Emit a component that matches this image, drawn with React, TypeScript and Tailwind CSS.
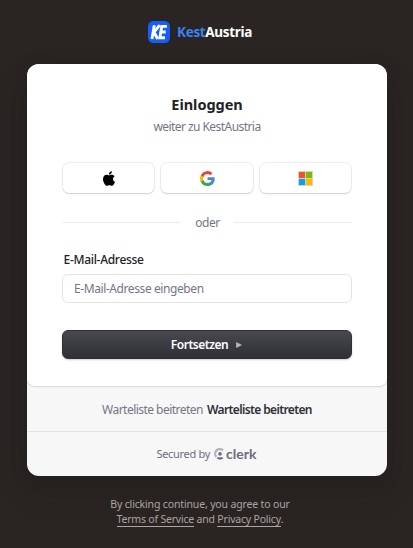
import React from 'react';

function Brand() {
  return (
    <header className="flex h-[22px] items-center justify-center gap-[7px] pr-[13px]">
      <svg width="22" height="22" viewBox="0 0 22 22">
        <rect width="22" height="22" rx="5.5" fill="#155dfc" />
        <g fill="none" stroke="#fff" strokeWidth="2.9">
          <path d="M6.3 4.2 4 18" />
          <path d="M11.7 4.2 6 11.2 9.7 18" />
          <path d="M18.9 5.4h-5.1l-2 11.3h5.2M12.9 11h4.8" />
        </g>
      </svg>
      <span className="text-[13.5px] leading-[22px] font-bold tracking-[-0.33px] whitespace-nowrap text-white">
        <span className="text-[#3b82f6]">Kest</span>Austria
      </span>
    </header>
  );
}

function AppleIcon() {
  return (
    <svg width="12" height="15" viewBox="0 0 814 1000" fill="#000">
      <path d="M788.1 340.9c-5.8 4.5-108.2 62.2-108.2 190.5 0 148.4 130.3 200.9 134.2 202.2-.6 3.2-20.7 71.9-68.7 141.9-42.8 61.6-87.5 123.1-155.5 123.1s-85.5-39.5-164-39.5c-76.5 0-103.7 40.8-165.9 40.8s-105.6-57-155.5-127C46.7 790.7 0 663 0 541.8c0-194.4 126.4-297.5 250.8-297.5 66.1 0 121.2 43.4 162.7 43.4 39.5 0 101.1-46 176.3-46 28.5 0 130.9 2.6 198.3 99.2zm-234-181.5c31.1-36.9 53.1-88.1 53.1-139.3 0-7.1-.6-14.3-1.9-20.1-50.6 1.9-110.8 33.7-147.1 75.8-28.5 32.4-55.1 83.6-55.1 135.5 0 7.8 1.3 15.6 1.9 18.1 3.2.6 8.4 1.3 13.6 1.3 45.4 0 102.5-30.4 135.5-71.3z" />
    </svg>
  );
}

function GoogleIcon() {
  return (
    <svg width="15" height="15" viewBox="0 0 24 24">
      <path fill="#4285f4" d="M23.5 12.3c0-.8-.1-1.6-.2-2.3H12v4.5h6.5a5.6 5.6 0 0 1-2.4 3.6v3h3.9c2.2-2.1 3.5-5.1 3.5-8.8z" />
      <path fill="#34a853" d="M12 24c3.2 0 6-1.1 8-2.9l-3.9-3c-1.1.7-2.5 1.1-4.1 1.1a7.2 7.2 0 0 1-6.7-4.9h-4v3.1A12 12 0 0 0 12 24z" />
      <path fill="#fbbc05" d="M5.3 14.3a7 7 0 0 1 0-4.6V6.6h-4a12 12 0 0 0 0 10.8z" />
      <path fill="#ea4335" d="M12 4.8c1.8 0 3.4.6 4.6 1.8L20 3.2A12 12 0 0 0 1.3 6.6l4 3.1A7.2 7.2 0 0 1 12 4.8z" />
    </svg>
  );
}

function MicrosoftIcon() {
  return (
    <svg width="15" height="15" viewBox="0 0 15 15">
      <path fill="#d9d2c4" d="M0 0h15v15H0z" />
      <path fill="#f25022" d="M1 1h6v6H1z" />
      <path fill="#7fba00" d="M8 1h6v6H8z" />
      <path fill="#00a4ef" d="M1 8h6v6H1z" />
      <path fill="#ffb900" d="M8 8h6v6H8z" />
    </svg>
  );
}

function ClerkMark() {
  return (
    <svg width="11" height="12" viewBox="0 0 11 12">
      <path d="M9 2.4A4.5 4.5 0 0 0 2.5 8.9" fill="none" stroke="#b4b4bd" strokeWidth="2.3" />
      <circle cx="6" cy="5.9" r="1.8" fill="#6c6c7c" />
      <path d="M2.6 10.5 4.1 9q1.9.9 3.8 0l1.5 1.5q-3.2 2.3-6.8 0z" fill="#6c6c7c" />
    </svg>
  );
}

function SocialButton({ label, children }: { label: string; children: React.ReactNode }) {
  return (
    <button
      aria-label={label}
      className="flex h-[30px] flex-1 items-center justify-center rounded-md bg-white shadow-[0_0_0_1px_rgba(0,0,0,0.07),0_1px_1px_rgba(0,0,0,0.08),0_2px_3px_rgba(0,0,0,0.03)]"
    >
      {children}
    </button>
  );
}

export default function App() {
  return (
    <div className="flex h-[548px] w-[413px] flex-col items-center overflow-hidden bg-[#2a2523] pt-[21px] font-['Noto_Sans',sans-serif] text-[12px]">
      <Brand />
      <main className="mt-[21px] flex h-[412px] w-[360px] shrink-0 flex-col overflow-hidden rounded-xl bg-[#f7f7f7] shadow-[0_5px_15px_rgba(25,28,25,0.3),0_15px_35px_-5px_rgba(25,28,25,0.25)]">
        <section className="h-[322px] rounded-b-lg bg-white px-[35px] pt-[30px] shadow-[0_0_1px_1px_rgba(0,0,0,0.06),0_1px_2px_rgba(0,0,0,0.08)]">
          <h1 className="h-[21px] pl-px text-center text-[14.5px] leading-[20px] font-bold tracking-[-0.03px] text-[#212126]">Einloggen</h1>
          <p className="mt-[3px] h-[18px] pl-px text-center leading-[18px] tracking-[-0.56px] text-[#747686]">weiter zu KestAustria</p>
          <div className="mt-[27px] flex gap-[7px] pr-[0.3px] pl-[1.5px]">
            <SocialButton label="Apple"><AppleIcon /></SocialButton>
            <SocialButton label="Google"><GoogleIcon /></SocialButton>
            <SocialButton label="Microsoft"><MicrosoftIcon /></SocialButton>
          </div>
          <div className="mt-[21px] flex h-[18px] items-center gap-[14px] pl-px">
            <i className="mb-px h-px flex-1 bg-[#ebebeb]" />
            <span className="pl-px leading-[18px] tracking-[-0.45px] text-[#747686]">oder</span>
            <i className="mb-px h-px flex-1 bg-[#ebebeb]" />
          </div>
          <label className="mt-[19px] block h-[18px] pl-[2px] leading-[18px] font-medium tracking-[-0.3px] text-[#212126]">E-Mail-Adresse</label>
          <div className="mt-[5px] flex h-[29px] items-center rounded-md border border-[#e3e3e3] bg-white pl-[11.5px] leading-[18px] tracking-[-0.41px] text-[#747686]">
            E-Mail-Adresse eingeben
          </div>
          <button className="mt-[27px] flex h-[29px] w-full items-center justify-center gap-2 rounded-md border border-[#303036] bg-linear-to-b from-[#48484e] to-[#2f3037] font-semibold tracking-[-0.47px] text-white shadow-[0_1px_2px_rgba(0,0,0,0.2)]">
            Fortsetzen
            <svg width="6" height="6" viewBox="0 0 6 6"><path d="M.2 0 6 3 .2 6z" fill="#b9b9bc" /></svg>
          </button>
        </section>
        <div className="flex h-[45px] items-center justify-center gap-1 pt-[2px] pl-px whitespace-nowrap">
          <span className="tracking-[-0.53px] text-[#747686]">Warteliste beitreten</span>
          <a className="font-semibold tracking-[-0.62px] text-[#2f3037]">Warteliste beitreten</a>
        </div>
        <footer className="flex h-[45px] items-center justify-center border-t border-[#e5e5e5] text-[#6c6c7c]">
          <span className="text-[11px] tracking-[-0.3px]">Secured by</span>
          <span className="ml-1"><ClerkMark /></span>
          <span className="ml-px font-['Lato',sans-serif] text-[14px] leading-[14px] font-bold">clerk</span>
        </footer>
      </main>
      <p className="mt-[21px] pr-[13px] text-center text-[10.5px] leading-[15px] tracking-[-0.2px] whitespace-nowrap text-[#aaa5a1]">
        <span className="tracking-[-0.15px]">By clicking continue, you agree to our</span><br />
        <a className="inline-block h-[15px] border-b border-[#aaa5a1]">Terms of Service</a> and <a className="inline-block h-[15px] border-b border-[#aaa5a1]">Privacy Policy</a>.
      </p>
    </div>
  );
}
